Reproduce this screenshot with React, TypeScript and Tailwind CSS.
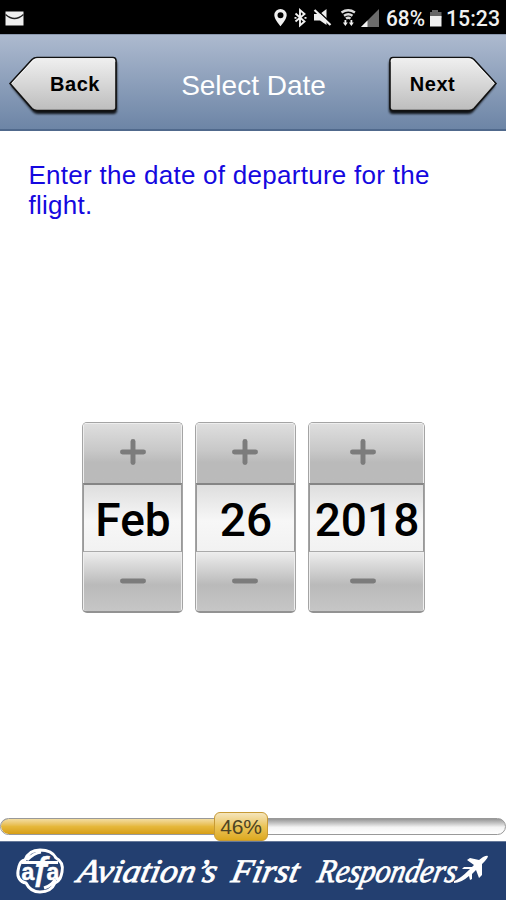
import { Minus, Plus } from 'lucide-react';

interface NavButtonProps {
  label: string;
  direction: 'back' | 'next';
}

interface PickerProps {
  value: string;
  className: string;
  iconClass: string;
}

const PICKERS: PickerProps[] = [
  { value: 'Feb', className: 'w-[101px]', iconClass: '-mt-[4px]' },
  { value: '26', className: 'w-[101px]', iconClass: '-mt-[4px] -ml-[2px]' },
  { value: '2018', className: 'w-[117px]', iconClass: '-mt-[4px] -ml-[8px]' },
];

const PROGRESS = 46;

function StatusBar() {
  return (
    <div className="flex h-[34px] shrink-0 items-start justify-between bg-black text-white">
      <svg className="mt-[11px] ml-[5px]" width="19" height="15" viewBox="0 0 19 15">
        <path d="M.5.5h18v14H.5z" fill="#eee" />
        <path d="M.5 3.5Q9.5 11.5 18.5 3.5" fill="none" stroke="#222" strokeWidth="1.5" />
      </svg>
      <svg width="236" height="34" viewBox="270 0 236 34" fill="#f0f0f0">
        {/* location */}
        <path fillRule="evenodd" d="M280.5 9a6.2 6.2 0 0 0-6.2 6.2c0 4 6.2 11 6.2 11s6.2-7 6.2-11A6.2 6.2 0 0 0 280.5 9zm0 3.2a3 3 0 1 1 0 6 3 3 0 0 1 0-6z" />
        {/* bluetooth */}
        <path d="M295.5 13.5l9 8-4.5 4V10l4.5 4-9 7.5" fill="none" stroke="#f0f0f0" strokeWidth="1.9" />
        <path d="M294.5 17h2v1.8h-2zM304.5 17h2v1.8h-2z" />
        {/* muted speaker */}
        <path d="M314 14h6l6.500-5V25l-6.500-4.500H314z" />
        <path d="M316 9l15 14" stroke="#000" strokeWidth="1.4" />
        <path d="M314.500 10l16 15" stroke="#f0f0f0" strokeWidth="2.2" />
        {/* wifi */}
        <g fill="none" stroke="#ddd">
          <path d="M341.5 12.5q6.7-4.5 13.4 0" strokeWidth="2.4" />
          <path d="M344 15.7q4.3-3 8.5 0" strokeWidth="2.4" />
          <path d="M346 18.6q2.3-1.6 4.5 0" strokeWidth="2.4" />
        </g>
        <path d="M344.5 20h1.8v2.600h1.5l-2.4 3.4-2.5-3.4h1.6zM350.500 20h1.8v2.600h1.5l-2.4 3.4-2.5-3.4h1.6z" />
        {/* signal */}
        <path d="M379 9v18h-18z" fill="#6b6b6b" />
        <path d="M367.5 20.5V27H361z" />
        {/* battery */}
        <path d="M432 10h6v2h3.5v6H430v-6h2z" fill="#666" />
        <path d="M430 16h11.5v10.5H430z" />
        <g fontFamily="Roboto, sans-serif" fontSize="22" fontWeight="500">
          <text x="386" y="26" textLength="39" lengthAdjust="spacingAndGlyphs">68%</text>
          <text x="446" y="26" textLength="54" lengthAdjust="spacingAndGlyphs">15:23</text>
        </g>
      </svg>
    </div>
  );
}

function NavButton({ label, direction }: NavButtonProps) {
  const isBack = direction === 'back';
  return (
    <button className="relative h-[62px] w-[112px] shrink-0">
      <svg
        className={isBack ? 'absolute inset-0' : 'absolute inset-0 -scale-x-100'}
        width="112"
        height="62"
        viewBox="0 0 112 62"
      >
        <defs>
          <linearGradient id={`nav-${direction}`} x1="0" y1="0" x2="0" y2="1">
            <stop offset="0" stopColor="#f0f0f0" />
            <stop offset="1" stopColor="#bdbdbd" />
          </linearGradient>
          <filter id={`shadow-${direction}`} x="-10%" y="-10%" width="120%" height="130%">
            <feGaussianBlur stdDeviation="1.2" />
          </filter>
        </defs>
        <path
          d="M4 32L26 8q2-2 5-2h75q4 0 4 4v46q0 4-4 4H31q-3 0-5-2z"
          fill="#000"
          opacity=".85"
          filter={`url(#shadow-${direction})`}
        />
        <path
          d="M3 29.5L25 5.500q2-2 5-2h76q3 0 3 3v47q0 3-3 3H30q-3 0-5-2z"
          fill={`url(#nav-${direction})`}
          stroke="#111"
          strokeWidth="1.6"
        />
        <path d="M5 29L26 6.500q2-2 5-2h74q3 0 3 3" fill="none" stroke="#fff" opacity=".7" />
      </svg>
      <span
        className={`relative block text-[20px] leading-[54px] font-bold tracking-[0.5px] text-black ${
          isBack ? 'pt-[3px] pb-[5px] pl-[24px]' : 'pt-[3px] pr-[21px] pb-[5px]'
        }`}
      >
        {label}
      </span>
    </button>
  );
}

function Header() {
  return (
    <header className="flex h-[97px] shrink-0 items-start justify-between border-t border-b-2 border-t-[#8996ab] border-b-[#50698c] bg-linear-to-b from-[#adbacf] to-[#6d85a6] px-[7px] pt-[19px]">
      <NavButton label="Back" direction="back" />
      <h1 className="mt-[14px] ml-[1px] text-[28px] leading-[36px] whitespace-nowrap text-white">Select Date</h1>
      <NavButton label="Next" direction="next" />
    </header>
  );
}

function Picker({ value, className, iconClass }: PickerProps) {
  return (
    <div
      className={`flex h-[191px] flex-col overflow-hidden rounded-[5px] border border-b-2 border-[#a4a4a4] border-b-[#929292] ${className}`}
    >
      <button className="flex h-[60px] items-center justify-center border border-b-0 border-[#eee] bg-linear-to-b from-[#dedede] via-[#c8c8c8] via-45% to-[#bababa] to-65% text-[#7c7c7c]">
        <Plus size={36} strokeWidth={3.3} className={iconClass} />
      </button>
      <div className="flex h-[69px] items-center justify-center border-x border-t-2 border-b border-x-[#999] border-t-[#858585] border-b-[#aaa] bg-linear-to-b from-[#dedede] via-[#f7f7f7] via-55% to-[#f2f2f2] font-[Roboto,sans-serif] text-[46px] leading-none font-medium text-black">
        <span className="mt-[4px] ml-px">{value}</span>
      </div>
      <button className="flex flex-1 items-center justify-center border border-b-0 border-[#eee] bg-linear-to-b from-[#ececec] via-[#bababa] via-55% to-[#c6c6c6] text-[#7c7c7c]">
        <Minus size={36} strokeWidth={3.3} className={`${iconClass} translate-y-px`} />
      </button>
    </div>
  );
}

function ProgressBar() {
  return (
    <div className="relative flex h-[30px] shrink-0 items-center pt-px">
      <div className="h-[17px] w-full overflow-hidden rounded-full border border-[#999] bg-linear-to-b from-[#969696] via-[#f4f4f4] via-55% to-white">
        <div
          className="h-full rounded-l-full bg-linear-to-b from-[#f3dda0] via-[#e6b83b] via-50% to-[#d79e13]"
          style={{ width: `${PROGRESS}%` }}
        />
      </div>
      <div className="absolute top-[1px] left-[214px] flex h-[29px] w-[54px] items-center justify-center rounded-[6px] border border-[#c79a35] bg-linear-to-b from-[#f5e5bb] via-[#ebc456] to-[#dda91b] pt-px text-[21px] tracking-[-0.2px] text-[#4e4424]">
        {PROGRESS}%
      </div>
    </div>
  );
}

function Footer() {
  return (
    <footer className="h-[59px] shrink-0 border-t border-[#66799a] bg-[#233f70]">
      <svg width="506" height="58" viewBox="0 842 506 58">
        {/* round emblem */}
        <path
          d="M25 860C28 852 34 850 40 850S53 852 56 858C62 861 63 867 62 872S60 881 55 883C52 890 46 892 40 892S29 889 26 883C20 882 17 877 18 871S20 861 25 860zM22 862.500h36M27 860q7-7 14-8M44 888q9-3 11-9"
          fill="none"
          stroke="#fff"
          strokeWidth="3"
        />
        <g
          fill="#fff"
          stroke="#fff"
          strokeWidth=".5"
          fontFamily="'Liberation Sans', Arial, sans-serif"
          fontWeight="700"
          textAnchor="middle"
        >
          <text x="28" y="880" fontSize="23">a</text>
          <text x="40" y="887" fontSize="43" fontStyle="italic" fontWeight="400">f</text>
          <text x="53" y="880" fontSize="23">a</text>
        </g>
        <g
          fill="#fff"
          stroke="#fff"
          strokeWidth=".8"
          fontFamily="'Brush Script MT', 'Liberation Serif', serif"
          fontSize="33"
          fontStyle="italic"
        >
          <text transform="translate(76 882) skewX(-12)" textLength="139" lengthAdjust="spacingAndGlyphs">Aviation’s</text>
          <text transform="translate(230 882) skewX(-12)" textLength="67" lengthAdjust="spacingAndGlyphs">First</text>
          <text transform="translate(316 882) skewX(-12)" textLength="139" lengthAdjust="spacingAndGlyphs">Responders</text>
        </g>
        {/* plane trailing off the last letter */}
        <path
          d="M454 881q6-2 16-12l-8 0 2-2 8 0 2-2-7-5 3-2 9 2 4-3q4-2 5-1 0 2-3 5l-3 3 0 11-3 3-3-8-4 4 0 5-2 1-1-4q-8 7-15 7z"
          fill="#fff"
        />
      </svg>
    </footer>
  );
}

export default function App() {
  return (
    <div className="flex h-[900px] w-[506px] flex-col overflow-hidden bg-white font-['Liberation_Sans',Arial,sans-serif]">
      <StatusBar />
      <Header />
      <main className="flex flex-1 flex-col">
        <p className="pt-[29px] pr-[28px] pl-[28.5px] text-[26px] leading-[30px] tracking-[0.27px] text-[#1508df]">
          Enter the date of departure for the flight.
        </p>
        <div className="mt-[202px] ml-[82px] flex gap-[12px]">
          {PICKERS.map((picker) => (
            <Picker key={picker.value} {...picker} />
          ))}
        </div>
      </main>
      <ProgressBar />
      <Footer />
    </div>
  );
}
